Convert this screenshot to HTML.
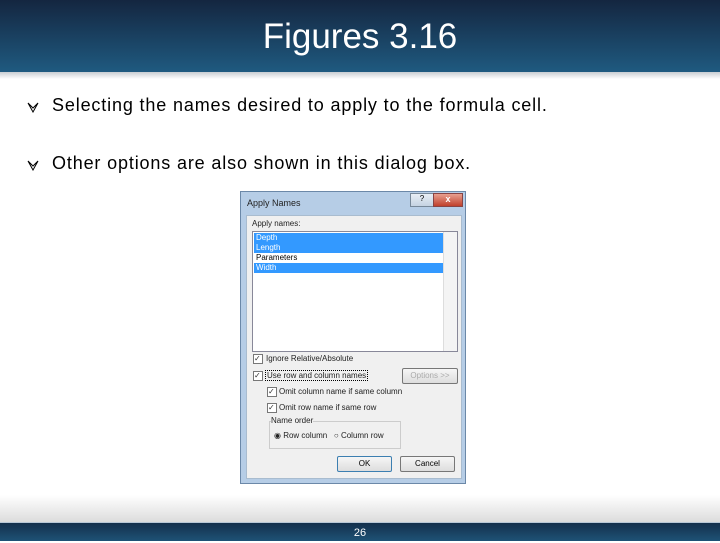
<!DOCTYPE html><html><head><style>
body{margin:0;width:720px;height:540px;position:relative;overflow:hidden;background:#fff;font-family:"Liberation Sans",sans-serif}
.hd{position:absolute;left:0;top:0;width:720px;height:72px;background:linear-gradient(#142640,#1f5a80);color:#fff;text-align:center;font-size:35px;line-height:74px}
.sh{position:absolute;left:0;top:72px;width:720px;height:7px;background:linear-gradient(#c9ced3,#fff)}
.fg{position:absolute;left:0;top:495px;width:720px;height:27px;background:linear-gradient(#fff,#dcdcdc)}
.ft{position:absolute;left:0;top:522px;width:720px;height:18px;background:linear-gradient(#14304c,#1e5276);border-top:1px solid #b9c8d6;color:#fff;font-size:11px;text-align:center;line-height:20px}
.b{position:absolute;left:27px;font-size:18px;color:#000}
.b span{position:absolute;left:25px;top:-2px;white-space:nowrap;letter-spacing:0.85px}
.dlg{position:absolute;left:240px;top:191px;width:226px;height:293px;background:#b6cde6;box-sizing:border-box;border:1px solid #6b88a8}
.in{position:absolute;left:5px;top:23px;width:214px;height:262px;background:#f0f0f0;border:1px solid #a9bccf}
.t{position:absolute;font-size:8px;color:#222;white-space:nowrap}
.lb{position:absolute;left:5px;top:15px;width:204px;height:119px;background:#fff;border:1px solid #889}
.sel{position:absolute;left:1px;width:187px;height:10px;background:#3399ff;color:#fff;font-size:8px;line-height:10px;padding-left:2px}
.cb{position:absolute;width:8px;height:8px;border:1px solid #777;background:#fff;font-size:8px;line-height:8px;color:#333}
.btn{position:absolute;height:14px;border:1px solid #777;border-radius:2px;background:linear-gradient(#f6f6f6,#ddd);font-size:8px;text-align:center;line-height:14px}
</style></head><body>
<div class="hd">Figures 3.16</div><div class="sh"></div>
<div class="b" style="top:97px"><svg width="12" height="12" viewBox="0 0 12 12"><path d="M1 2 L6 11 L11 2 L6 7 Z" fill="none" stroke="#000" stroke-width="1"/></svg><span>Selecting the names desired to apply to the formula cell.</span></div>
<div class="b" style="top:155px"><svg width="12" height="12" viewBox="0 0 12 12"><path d="M1 2 L6 11 L11 2 L6 7 Z" fill="none" stroke="#000" stroke-width="1"/></svg><span>Other options are also shown in this dialog box.</span></div>
<div class="fg"></div>
<div class="dlg">
<div class="t" style="left:6px;top:6px;font-size:9px">Apply Names</div>
<div style="position:absolute;left:169px;top:1px;width:22px;height:12px;background:linear-gradient(#e8eef5,#c5d3e2);border:1px solid #789;font-size:8px;text-align:center">?</div>
<div style="position:absolute;left:192px;top:1px;width:28px;height:12px;background:linear-gradient(#e8a090,#c0402c);border:1px solid #844;color:#fff;font-size:9px;text-align:center;font-weight:bold">x</div>
<div class="in">
<div class="t" style="left:5px;top:3px">Apply names:</div>
<div class="lb">
<div class="sel" style="top:1px">Depth</div>
<div class="sel" style="top:11px">Length</div>
<div class="t" style="left:3px;top:21px;color:#000">Parameters</div>
<div class="sel" style="top:31px">Width</div>
<div style="position:absolute;right:0;top:0;width:13px;height:119px;background:#f4f4f4;border-left:1px solid #ddd"></div>
</div>
<div class="cb" style="left:6px;top:138px">✓</div><div class="t" style="left:19px;top:138px">Ignore Relative/Absolute</div>
<div class="cb" style="left:6px;top:155px">✓</div><div class="t" style="left:18px;top:154px;border:1px dotted #000;padding:0 1px">Use row and column names</div>
<div class="btn" style="left:155px;top:152px;width:54px;color:#aaa">Options &gt;&gt;</div>
<div class="cb" style="left:20px;top:171px">✓</div><div class="t" style="left:32px;top:171px">Omit column name if same column</div>
<div class="cb" style="left:20px;top:187px">✓</div><div class="t" style="left:32px;top:187px">Omit row name if same row</div>
<div style="position:absolute;left:22px;top:205px;width:130px;height:26px;border:1px solid #ccc"></div>
<div class="t" style="left:24px;top:200px;background:#f0f0f0">Name order</div>
<div class="t" style="left:27px;top:215px">◉ Row column &nbsp; ○ Column row</div>
<div class="btn" style="left:90px;top:240px;width:53px;border-color:#3c7fb1">OK</div>
<div class="btn" style="left:153px;top:240px;width:53px">Cancel</div>
</div></div>
<div class="ft">26</div>
</body></html>
